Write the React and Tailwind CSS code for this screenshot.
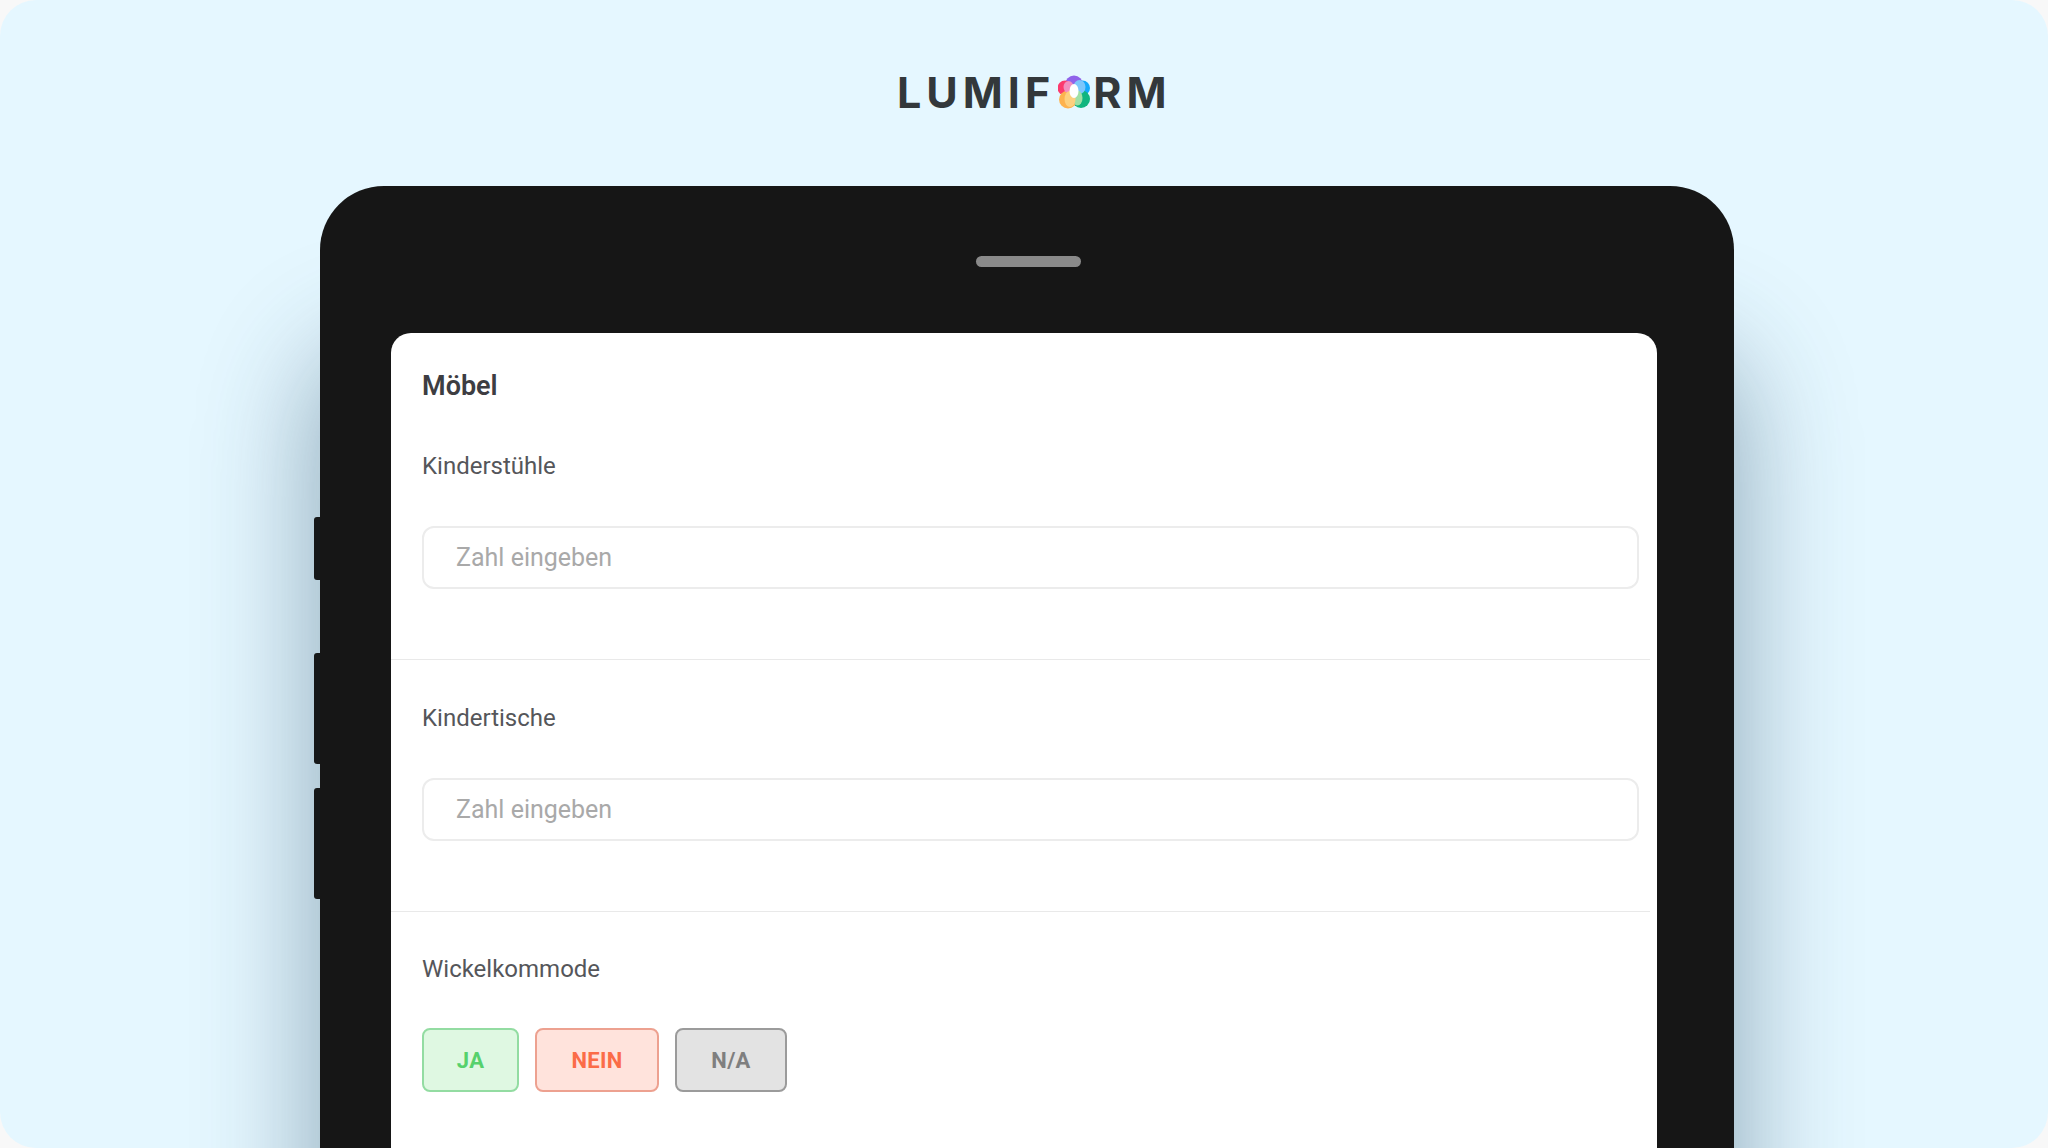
const Flower = () => (
  <svg width="32" height="34" viewBox="0 0 32 34" className="mx-[3px] shrink-0">
    <g style={{ mixBlendMode: "normal" }}>
      <circle cx="16" cy="9.5" r="9" fill="#8f63ea" />
      <circle cx="24.5" cy="13" r="7.5" fill="#14a9fb" />
      <circle cx="23" cy="24" r="9" fill="#10b57f" />
      <circle cx="7" cy="13" r="7.5" fill="#fb3a6e" />
      <circle cx="10" cy="24.5" r="9" fill="#fdb24e" />
      <ellipse cx="21.5" cy="12" rx="6" ry="7" fill="#7cc7fb" />
      <ellipse cx="10.5" cy="12" rx="5" ry="6" fill="#f28fc0" />
      <ellipse cx="19.5" cy="23" rx="5" ry="7.5" fill="#9fe0a5" />
      <ellipse cx="12" cy="24" rx="5.5" ry="8" fill="#fdd07e" />
      <ellipse cx="16" cy="16" rx="4.5" ry="7" fill="#ffffff" />
    </g>
  </svg>
);

const Field = ({ label, className }) => (
  <div className={`border-b border-[#e9e9e9] mr-[7px] pl-[31px] pr-[11px] ${className}`}>
    <div className="text-[24px] leading-[30px] text-[#55565a]">{label}</div>
    <div className="mt-[45px] h-[63px] rounded-[12px] border-2 border-[#ececec] bg-white pl-[32px] flex items-center text-[25px] text-[#a9a9a9]">
      Zahl eingeben
    </div>
  </div>
);

const Choice = ({ className, children }) => (
  <div className={`h-[64px] rounded-[8px] border-2 flex items-center justify-center text-[22px] font-bold tracking-[0.3px] ${className}`}>
    {children}
  </div>
);

export default function App() {
  return (
    <div className="h-[1148px] overflow-hidden bg-[#f8f8f8] font-['Roboto',sans-serif]">
      <div className="h-full overflow-hidden rounded-[36px] bg-[#e5f7ff]">
        <div className="h-[186px] pt-[71px] pl-[897px] flex items-start">
          <div className="flex items-center h-[42px] text-[43px] leading-none font-bold tracking-[5px] text-[#33383b] font-['Inter',sans-serif]">
            <span>LUMIF</span>
            <Flower />
            <span>RM</span>
          </div>
        </div>
        <div className="relative ml-[320px] w-[1414px] h-[1000px] rounded-t-[64px] bg-[#161616] shadow-[0_170px_110px_10px_rgba(35,75,100,0.42)]">
          <div className="absolute left-[-6px] top-[331px] h-[63px] w-[6px] rounded-l-[3px] bg-[#161819]" />
          <div className="absolute left-[-6px] top-[467px] h-[111px] w-[6px] rounded-l-[3px] bg-[#161819]" />
          <div className="absolute left-[-6px] top-[602px] h-[111px] w-[6px] rounded-l-[3px] bg-[#161819]" />
          <div className="pt-[70px] flex justify-center pl-[2px]">
            <div className="h-[11px] w-[105px] rounded-full bg-[#8a8a8a]" />
          </div>
          <div className="mt-[66px] ml-[71px] w-[1266px] h-[900px] rounded-t-[20px] bg-white">
            <div className="pl-[31px] pt-[37px] text-[27px] leading-[32px] font-semibold text-[#3d3d42]">Möbel</div>
            <Field label="Kinderstühle" className="pt-[49px] pb-[70px]" />
            <Field label="Kindertische" className="pt-[43px] pb-[70px]" />
            <div className="pl-[31px] pt-[42px]">
              <div className="text-[24px] leading-[30px] text-[#55565a]">Wickelkommode</div>
              <div className="mt-[44px] flex gap-[16px]">
                <Choice className="w-[97px] bg-[#dff8e2] border-[#93dca2] text-[#56d16c]">JA</Choice>
                <Choice className="w-[124px] bg-[#ffe3dc] border-[#eda190] text-[#fb6c48]">NEIN</Choice>
                <Choice className="w-[112px] bg-[#e3e3e3] border-[#9b9b9b] text-[#7f7f7f]">N/A</Choice>
              </div>
            </div>
          </div>
        </div>
      </div>
    </div>
  );
}
